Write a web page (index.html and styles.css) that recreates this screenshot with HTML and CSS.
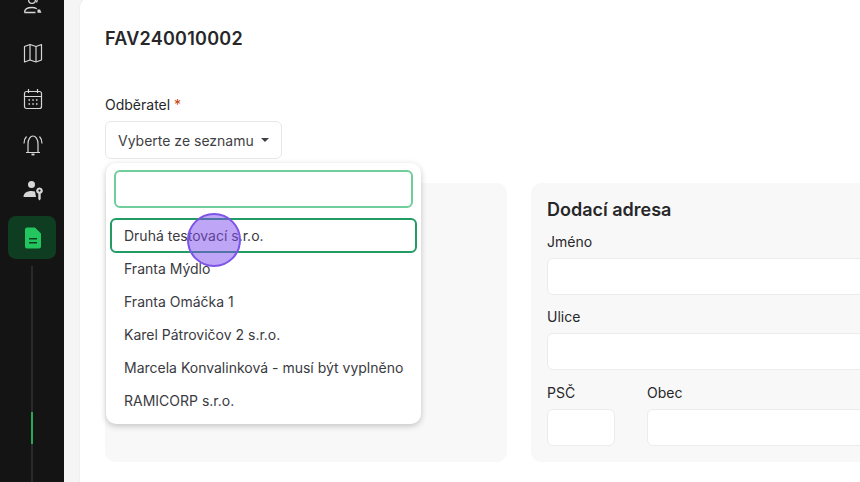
FILE: index.html
```html
<!DOCTYPE html>
<html lang="cs">
<head>
  <meta charset="UTF-8" />
  <title>FAV240010002</title>
  <link rel="stylesheet" href="styles.css">
</head>
<body>
  <nav class="sidebar">
    <div class="nav-items">
      <a class="nav-item">
        <svg width="24" height="24" viewBox="0 0 24 24" fill="none" stroke="currentColor" stroke-width="1.3">
          <circle cx="11" cy="5" r="3.4"/>
          <path d="M15.500 2.500q1.200 2.500 0 5"/>
          <path d="M3.500 17.500c0-3.500 3.500-5 7.500-5 2 0 3.500.4 4.800 1.200M3.500 17.500h11"/>
          <path d="M16.500 14.500l2.500 0 1.500 3.200h-4z" fill="currentColor" stroke="none"/>
        </svg>
      </a>
      <a class="nav-item">
        <svg width="24" height="24" viewBox="0 0 24 24" fill="none" stroke="currentColor" stroke-width="1.2" stroke-linejoin="round">
          <path d="M3.500 5.500l5.500-2 6 2 5.500-2v15.500l-5.500 2-6-2-5.500 2z"/>
          <path d="M9 3.500v15.500M15 5.500v15.500"/>
        </svg>
      </a>
      <a class="nav-item">
        <svg width="24" height="24" viewBox="0 0 24 24" fill="none" stroke="currentColor" stroke-width="1.2">
          <rect x="3.500" y="4.500" width="17" height="17" rx="2"/>
          <path d="M3.500 9.500h17M7.500 2v4M16.500 2v4"/>
          <path d="M7.500 13h1.500M11.300 13h1.500M15 13h1.500M7.500 17h1.500M11.300 17h1.500M15 17h1.500" stroke-width="1.500"/>
        </svg>
      </a>
      <a class="nav-item">
        <svg width="24" height="24" viewBox="0 0 24 24" fill="none" stroke="currentColor" stroke-width="1.2">
          <path d="M7 19.500v-8.500c0-5 2.500-8 5-8s5 3 5 8v8.500M5 19.500h14"/>
          <path d="M10.500 21.500h3" stroke-width="1.800"/>
          <path d="M5.500 3.500q-2.500 2.500-2.500 7M18.500 3.500q2.500 2.500 2.500 7"/>
        </svg>
      </a>
      <a class="nav-item">
        <svg width="24" height="24" viewBox="0 0 24 24" fill="currentColor">
          <circle cx="10.500" cy="5.500" r="3.500"/>
          <path d="M2.500 18c0-4 3.500-6 8-6 1.300 0 2.500.2 3.500.5l1 5.500z"/>
          <path fill-rule="evenodd" d="M18.500 8.500a3.200 3.200 0 0 1 1.200 6.200v5.300l-1.200 1.500-1.200-1.500v-5.300a3.200 3.200 0 0 1 1.200-6.200zm0 2a1.100 1.100 0 1 0 0 2.200 1.100 1.100 0 0 0 0-2.200z"/>
        </svg>
      </a>
      <a class="nav-item nav-item-active">
        <svg width="24" height="24" viewBox="0 0 24 24" fill="currentColor">
          <path fill-rule="evenodd" d="M6 1.500h8l6 6v13a2 2 0 0 1-2 2H6a2 2 0 0 1-2-2v-17a2 2 0 0 1 2-2zm2 10.500v1.500h8V12zm0 4v1.500h8V16z"/>
        </svg>
      </a>
    </div>
    <div class="scroll-track">
      <div class="scroll-thumb"></div>
    </div>
  </nav>

  <main class="content">
    <div class="card">
      <h1 class="doc-title">FAV240010002</h1>

      <div class="field-customer">
        <label class="label">Odběratel <span class="required">*</span></label>
        <button class="select-btn">Vyberte ze seznamu <span class="caret"></span></button>

        <div class="dropdown">
          <input type="text" class="dropdown-search" />
          <ul class="dropdown-list">
            <li class="dropdown-item dropdown-item-active">Druhá testovací s.r.o.</li>
            <li class="dropdown-item">Franta Mýdlo</li>
            <li class="dropdown-item">Franta Omáčka 1</li>
            <li class="dropdown-item">Karel Pátrovičov 2 s.r.o.</li>
            <li class="dropdown-item">Marcela Konvalinková - musí být vyplněno</li>
            <li class="dropdown-item">RAMICORP s.r.o.</li>
          </ul>
        </div>
        <div class="click-marker"></div>
      </div>

      <div class="panels">
        <section class="panel"></section>
        <section class="panel">
          <h2 class="panel-title">Dodací adresa</h2>
          <label class="label">Jméno</label>
          <input type="text" class="input input-gap" />
          <label class="label">Ulice</label>
          <input type="text" class="input input-gap" />
          <div class="city-row">
            <div class="city-zip">
              <label class="label">PSČ</label>
              <input type="text" class="input" />
            </div>
            <div class="city-name">
              <label class="label">Obec</label>
              <input type="text" class="input" />
            </div>
          </div>
        </section>
      </div>
    </div>
  </main>
</body>
</html>
```

FILE: styles.css
```css
* {
  box-sizing: border-box;
}
html, body {
  height: 100%;
}
body {
  margin: 0;
  display: flex;
  overflow: hidden;
  background-color: #f5f5f5;
  color: #27272a;
  font-family: Inter, "Noto Sans", sans-serif;
  font-size: 14px;
}

/* Sidebar */
.sidebar {
  width: 64px;
  flex-shrink: 0;
  display: flex;
  flex-direction: column;
  align-items: center;
  background-color: #141414;
  overflow: hidden;
}
.nav-items {
  display: flex;
  flex-direction: column;
  align-items: center;
  margin-top: -16px;
}
.nav-item {
  width: 48px;
  height: 46px;
  padding-left: 2px;
  display: flex;
  align-items: center;
  justify-content: center;
  color: #d6d6d6;
  border-radius: 8px;
}
.nav-item-active {
  height: 43px;
  margin-top: 2px;
  background-color: #0f3d22;
  color: #22c55e;
}
.scroll-track {
  width: 2px;
  flex: 1;
  margin-top: 7px;
  background-color: #2a2a2a;
  padding-top: 146px;
}
.scroll-thumb {
  height: 32px;
  background-color: #22a95a;
}

/* Main card */
.content {
  flex: 1;
  min-width: 0;
  padding-left: 16px;
}
.card {
  height: 500px;
  margin-top: -4px;
  padding: 29px 0 0 25px;
  background: white;
  border-radius: 12px 0 0 12px;
  overflow: hidden;
  box-shadow: 0 0 2px rgba(0,0,0,0.08);
}
.doc-title {
  margin: 0;
  font-size: 18px;
  line-height: 28px;
  font-weight: 600;
  letter-spacing: 0.25px;
  color: #27272a;
}
.field-customer {
  position: relative;
  margin-top: 42px;
  height: 64px;
}
.label {
  display: block;
  font-size: 14px;
  line-height: 20px;
  font-weight: 400;
  color: #27272a;
}
.required {
  color: #c2410c;
}
.select-btn {
  display: flex;
  align-items: center;
  gap: 7px;
  height: 38px;
  margin-top: 6px;
  padding: 0 12px;
  background: white;
  border: 1px solid #e7e7e7;
  border-radius: 6px;
  font-family: inherit;
  font-size: 14px;
  color: #3f3f46;
}
.caret {
  width: 0;
  height: 0;
  border-left: 4px solid transparent;
  border-right: 4px solid transparent;
  border-top: 4px solid #3f3f46;
}

/* Dropdown */
.dropdown {
  position: absolute;
  z-index: 2;
  top: 68px;
  left: 1px;
  width: 315px;
  height: 261px;
  padding: 7px 4px 0;
  background: white;
  border-radius: 10px;
  box-shadow: 0 2px 6px rgba(0,0,0,0.22);
}
.dropdown-search {
  display: block;
  width: 299px;
  height: 38px;
  margin-left: 4px;
  background: white;
  border: 2px solid #6fce9a;
  border-radius: 6px;
}
.dropdown-list {
  list-style: none;
  margin: 10px 0 0;
  padding: 0;
}
.dropdown-item {
  height: 33px;
  padding: 0 14px;
  display: flex;
  align-items: center;
  white-space: nowrap;
  font-size: 14px;
  color: #3a3a3f;
}
.dropdown-item-active {
  height: 35px;
  margin-bottom: -1px;
  border: 2px solid #229c63;
  border-radius: 6px;
  padding: 0 12px;
}
.click-marker {
  position: absolute;
  z-index: 3;
  top: 118px;
  left: 82px;
  width: 54px;
  height: 54px;
  border-radius: 50%;
  border: 2px solid #7c54e8;
  background-color: rgba(128,76,235,0.5);
}

/* Address panels */
.panels {
  display: grid;
  grid-template-columns: 402px 402px;
  gap: 24px;
  margin-top: 24px;
}
.panel {
  height: 279px;
  padding: 16px;
  background-color: #f8f8f8;
  border-radius: 10px;
}
.panel-title {
  margin: 0 0 10.5px;
  font-size: 18px;
  line-height: 22px;
  font-weight: 600;
  color: #27272a;
}
.input {
  display: block;
  width: 100%;
  height: 37px;
  margin-top: 6px;
  background: white;
  border: 1px solid #ececec;
  border-radius: 6px;
}
.input-gap {
  margin-bottom: 12.5px;
}
.city-row {
  display: flex;
  gap: 32px;
}
.city-zip {
  width: 68px;
}
.city-name {
  flex: 1;
}
```
